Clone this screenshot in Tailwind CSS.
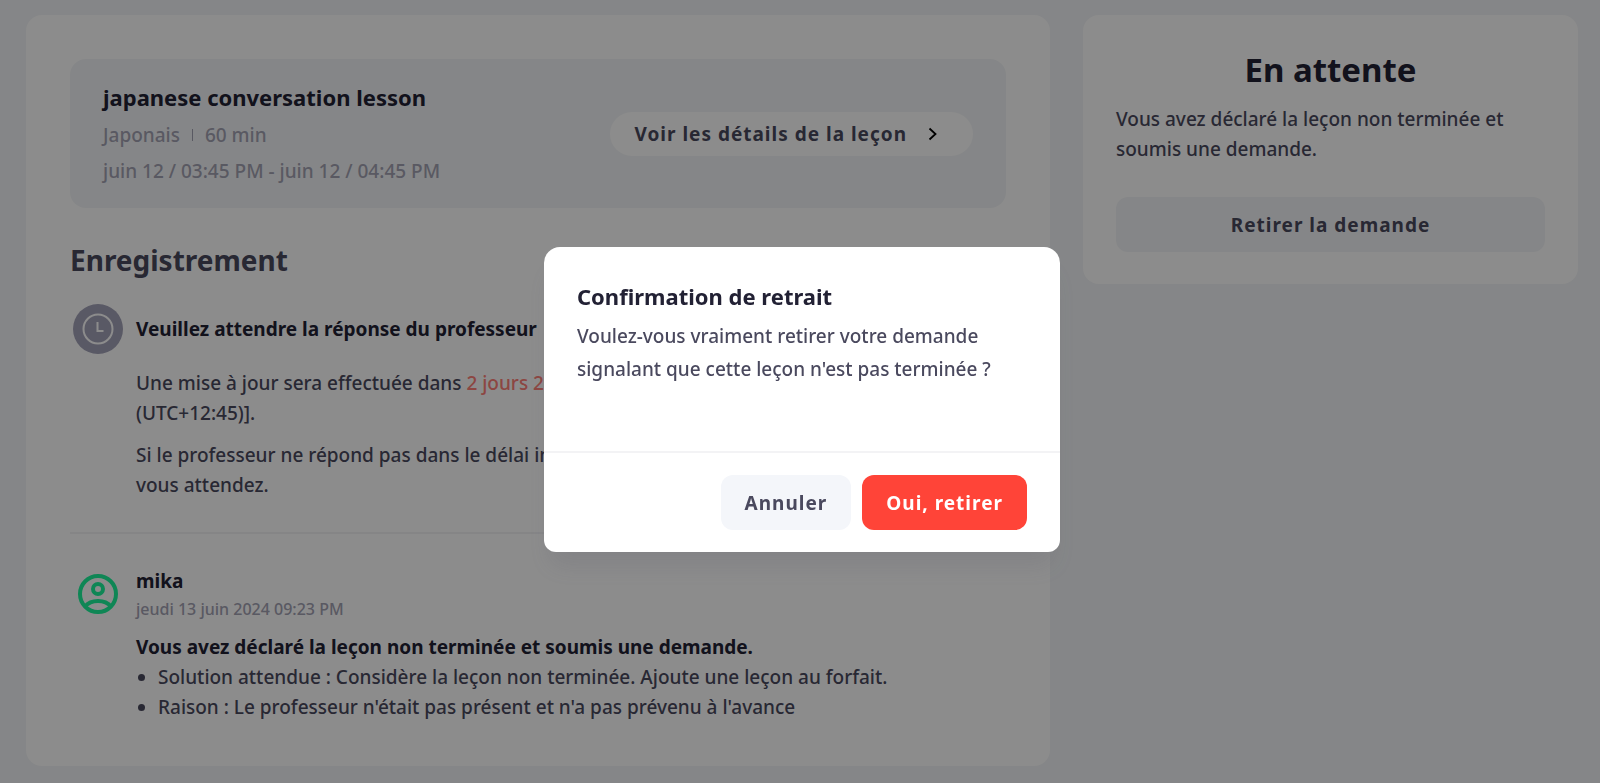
<!DOCTYPE html>
<html lang="fr">
<head>
<meta charset="utf-8">
<title>Demande en attente</title>
<script src="https://cdn.jsdelivr.net/npm/@tailwindcss/browser@4"></script>
</head>
<body class="min-h-screen bg-[#f3f5f7] font-['Noto_Sans',sans-serif] font-medium text-[19px] leading-[30px] text-[#4a495e]">
<div class="flex items-start gap-[33px] pl-[26px] pr-[22px] py-[15px]">
  <main class="flex-1 rounded-2xl bg-white px-11 pt-11 pb-11">
    <section class="flex items-center justify-between rounded-2xl bg-[#f3f5f7] px-[33px] pt-5 pb-[19px]">
      <div class="text-[#a3a2b3]">
        <h2 class="mb-[2px] text-[22px] leading-9 font-bold text-[#222134]">japanese conversation lesson</h2>
        <p class="flex items-center gap-3 leading-9"><span>Japonais</span><span class="h-3 w-px bg-[#a3a2b3]"></span><span>60 min</span></p>
        <p class="leading-9">juin 12 / 03:45 PM - juin 12 / 04:45 PM</p>
      </div>
      <a href="#" class="flex h-11 items-center gap-[18px] rounded-full bg-white pl-6 pr-8 font-bold tracking-[1px]">Voir les détails de la leçon
        <svg class="size-4" viewBox="0 0 16 16" fill="none" stroke="#000" stroke-width="1.800"><path d="M4.500 2.500 L10.500 8 L4.500 13.500"/></svg>
      </a>
    </section>
    <h1 class="mt-8 text-[28px] leading-10 font-bold">Enregistrement</h1>
    <section class="mt-6 flex gap-[13px]">
      <svg class="ml-[3px] size-[50px] shrink-0" viewBox="0 0 50 50" fill="none"><circle cx="25" cy="25" r="25" fill="#a3a2b8"/><circle cx="25" cy="25" r="14.500" stroke="#fff" stroke-width="2"/><path d="M24.500 18v9h6" stroke="#fff" stroke-width="2"/></svg>
      <div>
        <h3 class="leading-[50px] font-bold text-[#222134]">Veuillez attendre la réponse du professeur</h3>
        <p class="mt-[14px]">Une mise à jour sera effectuée dans <span class="text-[#ff8078]">2 jours 23 heures</span> [16 juin 2024 09:23 PM<br>(UTC+12:45)].</p>
        <p class="mt-3">Si le professeur ne répond pas dans le délai imparti, la demande sera réglée comme<br>vous attendez.</p>
      </div>
    </section>
    <hr class="mt-8 border-t-2 border-[#f3f3f5]">
    <section class="mt-8 flex gap-[13px] pt-px">
      <svg class="ml-[3px] mt-[2px] size-[50px] shrink-0" viewBox="0 0 50 50" fill="none" stroke="#1cf59c" stroke-width="4"><circle cx="25" cy="25" r="18"/><circle cx="25" cy="20" r="5"/><path d="M12 37.500C18 30 32 30 38 37.500"/></svg>
      <div>
        <h3 class="font-bold leading-7 text-[#222134]">mika</h3>
        <p class="text-base leading-7 text-[#a3a2b3]">jeudi 13 juin 2024 09:23 PM</p>
        <p class="mt-[9px] font-bold text-[#222134]">Vous avez déclaré la leçon non terminée et soumis une demande.</p>
        <ul class="list-disc pl-[22px]">
          <li>Solution attendue : Considère la leçon non terminée. Ajoute une leçon au forfait.</li>
          <li>Raison : Le professeur n'était pas présent et n'a pas prévenu à l'avance</li>
        </ul>
      </div>
    </section>
  </main>
  <aside class="w-[495px] rounded-2xl bg-white px-[33px] pt-[31px] pb-8">
    <h2 class="text-center text-[33px] leading-[48px] font-bold text-[#222134]">En attente</h2>
    <p class="mt-[10px]">Vous avez déclaré la leçon non terminée et soumis une demande.</p>
    <button class="mt-[33px] h-[55px] w-full rounded-xl bg-[#f3f5f7] font-bold tracking-[1px]">Retirer la demande</button>
  </aside>
</div>
<div class="fixed inset-0 flex items-center justify-center bg-black/45">
  <div role="dialog" aria-modal="true" aria-labelledby="dlg-title" class="mt-4 ml-1 w-[516px] rounded-2xl rounded-b-xl bg-white shadow-[0_20px_24px_-6px_rgba(74,73,94,0.15)]">
    <div class="px-[33px] pt-[33px] pb-[65px]">
      <h2 id="dlg-title" class="text-[22px] leading-8 font-bold text-[#222134]">Confirmation de retrait</h2>
      <p class="mt-2 leading-[33px]">Voulez-vous vraiment retirer votre demande signalant que cette leçon n'est pas terminée ?</p>
    </div>
    <div class="flex justify-end gap-[11px] border-t-2 border-[#f3f3f5] px-[33px] py-[22px]">
      <button class="h-[55px] rounded-xl bg-[#f4f6fa] px-6 font-bold tracking-[1px]">Annuler</button>
      <button class="h-[55px] rounded-xl bg-[#ff4438] px-6 font-bold tracking-[1px] text-white">Oui, retirer</button>
    </div>
  </div>
</div>
</body>
</html>
